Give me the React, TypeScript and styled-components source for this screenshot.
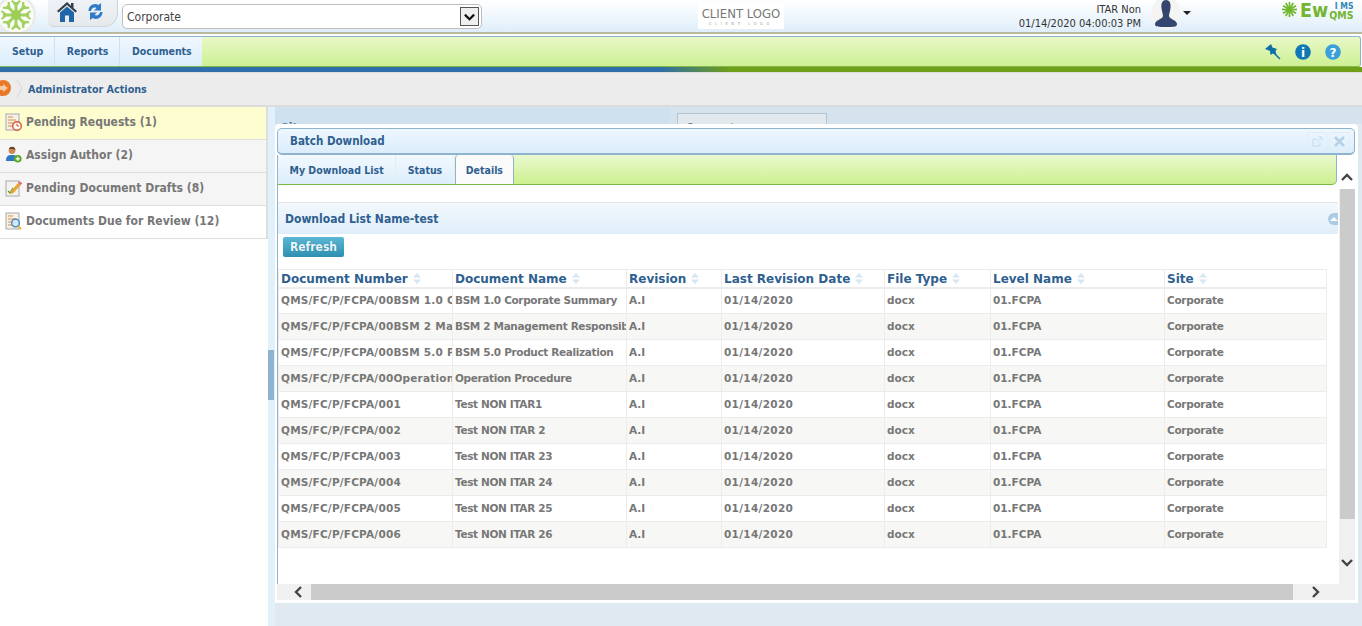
import React from "react";
import styled, { createGlobalStyle } from "styled-components";

const Global = createGlobalStyle`
  html, body { margin: 0; padding: 0; background: #fff; }
  body { font-family: "DejaVu Sans", sans-serif; overflow: hidden; }
  * { box-sizing: border-box; }
`;
const TAHOMA = `"DejaVu Sans Condensed", "DejaVu Sans", sans-serif`;
const VERDANA = `"DejaVu Sans", Verdana, sans-serif`;

const Page = styled.div`width: 1362px; height: 626px; overflow: hidden; display: flex; flex-direction: column; background: #fff;`;
const Header = styled.header`height: 32px; flex: none; display: flex; align-items: flex-start; background: linear-gradient(#ffffff, #dfeefa);`;
const LogoBall = styled.div`width: 36px; height: 32px; flex: none; margin-right: 12px; overflow: hidden;`;
const HomeTab = styled.div`width: 70px; height: 27px; flex: none; display: flex; align-items: center; gap: 11px; padding: 0 0 4px 9px; background: linear-gradient(#eef2f6, #e6e9ec); border-radius: 0 0 14px 6px; border-right: 1px solid #ccd2d8; border-bottom: 1px solid #d0d6dc;`;
const SelectBox = styled.div`width: 360px; height: 25px; margin: 4px 0 0 4px; flex: none; background: #fff; border: 1px solid #bdbdbd; border-radius: 5px; display: flex; align-items: center; justify-content: space-between; padding: 0 2px 0 4px; font: 12px ${TAHOMA}; color: #444;`;
const SelectArrow = styled.span`width: 19px; height: 19px; border: 1px solid #555; background: #efefef; display: flex; align-items: center; justify-content: center;`;
const ClientLogo = styled.div`width: 86px; height: 25px; flex: none; margin: 4px 0 0 216px; background: #fff; color: #777; font: 13px/13px ${TAHOMA}; text-align: center; padding-top: 3px; white-space: nowrap;`;
const ClientSub = styled.div`font-size: 4px; line-height: 7px; letter-spacing: 3.6px; color: #999;`;
const UserInfo = styled.div`width: 357px; flex: none; text-align: right; font: 11px/14px ${TAHOMA}; color: #333; padding-top: 3px;`;
const UserInfoLine = styled.div`white-space: nowrap;`;
const Avatar = styled.div`width: 32px; height: 30px; flex: none; margin-left: 9px;`;
const Caret = styled.span`width: 0; height: 0; flex: none; margin: 11px 0 0 1px; border: 4px solid transparent; border-top: 4px solid #222; border-bottom: none;`;
const Brand = styled.div`flex: none; margin: 0 0 0 auto; width: 81px; height: 28px; display: flex; align-items: flex-start; padding-top: 2px;`;
const BrandWord = styled.span`font: bold 19.5px/18px ${TAHOMA}; color: #72b52e; margin: 0 0 0 2px;`;
const BrandStack = styled.span`display: flex; flex-direction: column; font: bold 8.5px/8px ${TAHOMA}; color: #2e88b5; text-align: right; margin-left: 1px;`;
const BrandQms = styled.span`color: #72b52e; font-size: 10.5px; line-height: 10px; font-weight: bold;`;
const Rule = styled.div`height: 2px; flex: none; background: #b9b99d; margin-bottom: 2px;`;

const NavBar = styled.nav`height: 31px; flex: none; margin-right: 1px; display: flex; justify-content: space-between; align-items: stretch; background: linear-gradient(#e8f8c8, #cef094); border: 1px solid #8fb3cd; border-bottom: 1px solid #83b94b; border-left: none; border-radius: 0 3px 3px 0; overflow: hidden;`;
const NavTabs = styled.div`display: flex; gap: 1px; background: #cfe3ee;`;
const NavTab = styled.div`padding: 0 10.5px 2px 12px; display: flex; align-items: center; background: linear-gradient(#f0f8ff, #dcedfa); font: bold 10.5px ${TAHOMA}; color: #2f5f90;`;
const NavIcons = styled.div`display: flex; align-items: center; gap: 14px; padding-right: 19px;`;
const ColorLine = styled.div`height: 6px; flex: none; background: linear-gradient(90deg, #2f6ea8 0, #2f6ea8 660px, #6f9e18 730px, #6f9e18 100%); border-bottom: 1px solid #dcdcdc;`;
const Crumbs = styled.div`height: 34px; flex: none; background: #ececec; display: flex; align-items: center; border-bottom: 2px solid #dcdcdc;`;
const CrumbTitle = styled.span`font: bold 10.7px ${TAHOMA}; color: #2f5f90; margin-left: 4px;`;

const Body = styled.div`flex: 1; display: flex; min-height: 0;`;
const Sidebar = styled.aside`width: 268px; flex: none; background: #fff;`;
const SideItem = styled.div<{ $bg: string }>`height: 33px; display: flex; align-items: center; gap: 4px; padding: 0 0 3px 5px; background: ${(p) => p.$bg}; border-bottom: 1px solid #dedede; border-right: 2px solid #dedede; font: bold 12px ${TAHOMA}; color: #777;`;
const Splitter = styled.div`width: 7px; flex: none; background: #e2f0fa; display: flex; flex-direction: column;`;
const SplitHandle = styled.div`height: 50px; margin-top: 243px; width: 6px; background: #8fb4d0;`;
const Content = styled.main`flex: 1; position: relative; background: #e0e9f1; overflow: hidden;`;
const BackStrip = styled.div`height: 17px; background: linear-gradient(90deg, #cfe0ee 395px, #d5e3ef 395px); display: flex; font: bold 12px ${TAHOMA}; color: #2f5f90; padding: 14px 0 0 6px; overflow: hidden;`;
const BackCombo = styled.div`width: 150px; height: 24px; flex: none; margin: -8px 0 0 372px; background: #e2e9ee; border: 1px solid #b6c2cc; padding: 8px 8px 0; font: bold 11px/12px ${TAHOMA}; color: #555;`;

const Modal = styled.section`position: absolute; left: 0; top: 17px; width: 1083px; height: 479px; background: #fff; padding: 4px 3px 3px 2px; display: flex; flex-direction: column; border-radius: 4px 4px 0 0; box-shadow: 0 0 2px #d8e2ea;`;
const ModalTitle = styled.div`height: 27px; flex: none; display: flex; align-items: center; justify-content: space-between; background: linear-gradient(#edf7ff, #dcedfb); border: 1px solid #8fb3cd; border-bottom-width: 2px; border-radius: 5px; padding: 0 4px 0 12px; font: bold 11.5px ${TAHOMA}; color: #2f5f90;`;
const TitleTools = styled.div`display: flex; gap: 1px;`;
const TitleTool = styled.span`width: 21px; height: 19px; border: 1px solid #e2edf5; border-radius: 3px; display: flex; align-items: center; justify-content: center;`;
const ModalBody = styled.div`flex: 1; display: grid; grid-template-columns: 1fr 17px; grid-template-rows: 1fr 16px; min-height: 0;`;
const Viewport = styled.div`overflow: hidden; min-width: 0; display: flex; flex-direction: column; border-left: 1px solid #8fb3cd;`;
const TabBar = styled.div`height: 30px; flex: none; margin-right: 1px; margin-left: -1px; display: flex; background: linear-gradient(#eaf9cf, #cdf08f); border: 1px solid #8fb3cd; border-top: none; border-bottom: 1px solid #78b843; border-radius: 5px 0 5px 0;`;
const SubTab = styled.div<{ $active?: boolean }>`padding: 0 ${(p) => (p.$active ? "10px" : "11.5px")}; display: flex; align-items: center; font: bold 10.5px ${TAHOMA}; color: #2f5f90; background: ${(p) => (p.$active ? "#fafafa" : "linear-gradient(#f2f9ff, #dcedfa)")}; border-right: 1px solid ${(p) => (p.$active ? "#8fb3cd" : "#e5efdf")}; border-left: ${(p) => (p.$active ? "1px solid #8fb3cd" : "none")}; border-radius: ${(p) => (p.$active ? "4px 4px 0 0" : "0")};`;
const Spacer = styled.div`height: 17px; flex: none;`;
const PanelHead = styled.div`height: 32px; flex: none; display: flex; align-items: center; justify-content: space-between; background: linear-gradient(#f2f8fd, #e0eef9); border-top: 1px solid #e6e6e6; padding-left: 7px; font: bold 12px ${TAHOMA}; color: #2f5f90;`;
const Collapse = styled.span`width: 10px; height: 12px; border-radius: 6px 0 0 6px; background: #a9cbe6; display: flex; align-items: center; justify-content: flex-end;`;
const CollapseMark = styled.span`width: 0; height: 0; border: 4px solid transparent; border-bottom: 4px solid #fff; border-top: none;`;
const Toolbar = styled.div`height: 35px; flex: none; padding: 2px 0 0 5px;`;
const RefreshBtn = styled.button`width: 61px; height: 20px; padding: 0; border: none; border-radius: 2px; background: linear-gradient(#5cb8d4, #2d8fb2); color: #eaf6fb; font: bold 12px ${TAHOMA}; text-shadow: 0 0 1px #1b6e8e;`;
const Table = styled.table`width: 1048px; border-collapse: collapse; table-layout: fixed;`;
const Th = styled.th`height: 18px; padding: 1px 2px 0; text-align: left; border: 1px solid #ececec; border-bottom: 2px solid #ececec; font: bold 12px ${VERDANA}; color: #2f5f90; white-space: nowrap; overflow: hidden;`;
const Tr = styled.tr<{ $alt: boolean }>`background: ${(p) => (p.$alt ? "#f7f7f5" : "#fff")};`;
const Td = styled.td<{ $ls?: number }>`height: 26px; padding: 0 2px 2px; border: 1px solid #ececec; font: bold 10.5px ${VERDANA}; letter-spacing: ${(p) => p.$ls ?? 0}px; color: #777; white-space: nowrap; overflow: hidden;`;
const SortMark = styled.svg`margin-left: 5px; vertical-align: -1px;`;
const VScroll = styled.div`background: #f0f0f0; display: flex; flex-direction: column; align-items: center; margin-left: 1px;`;
const VThumb = styled.div`width: 15px; height: 330px; flex: none; background: #cbcbcb;`;
const ScrollUp = styled.div`height: 34px; width: 100%; flex: none; display: flex; align-items: center; justify-content: center; padding-top: 10px; background: #fff;`;
const ScrollDown = styled.div`height: 44px; width: 100%; flex: none; margin-top: auto; display: flex; align-items: center; justify-content: center;`;
const HScroll = styled.div`background: #f0f0f0; display: flex; align-items: center;`;
const HBtn = styled.div<{ $w: number; $pad?: number }>`width: ${(p) => p.$w}px; height: 16px; flex: none; padding-left: ${(p) => p.$pad ?? 0}px; display: flex; align-items: center; justify-content: center;`;
const HThumb = styled.div`flex: 1; height: 16px; background: #cbcbcb;`;
const Corner = styled.div`background: #f0f0f0;`;

const Snow = () => (
  <svg width="36" height="32" viewBox="0 0 36 32">
    <circle cx="16" cy="15" r="20" fill="#e9ece9" />
    <circle cx="16" cy="15" r="17.5" fill="#fbfbf8" />
    <g fill="none" stroke="#a3d160" strokeWidth="3">
      {[0, 45, 90, 135, 180, 225, 270, 315].map((a) => (
        <g key={a} transform={`rotate(${a} 16 15)`}>
          <path d="M16 15 V2" />
          <path d="M12 0.5 L16 5.5 L20 0.5" strokeWidth="2.2" />
        </g>
      ))}
    </g>
    <circle cx="16" cy="15" r="5" fill="#9ccd58" />
  </svg>
);
const Home = () => (
  <svg width="20" height="21" viewBox="0 0 20 21">
    <path d="M10 1 L0 10 L1.5 11.5 L10 4 L18.5 11.5 L20 10 L16.5 7 V2 H14 V4.7 Z" fill="#333f4d" />
    <path d="M3 11.5 L10 5.5 L17 11.5 V21 H12 V14.5 H8 V21 H3 Z" fill="#1f66a8" />
  </svg>
);
const Sync = () => (
  <svg width="15" height="17" viewBox="0 0 15 17">
    <path d="M0.5 8 C0.5 2.5 6 -0.5 10.5 2 L13 0 V7.5 H6 L8.5 5 C6 3.8 3.5 5 3 8 Z" fill="#2f7bc8" />
    <path d="M14.5 9 C14.5 14.5 9 17.5 4.5 15 L2 17 V9.5 H9 L6.5 12 C9 13.2 11.5 12 12 9 Z" fill="#2f7bc8" />
  </svg>
);
const Chevron = ({ dir, size = 14, color = "#444", sw = 2.4 }: { dir: "up" | "down" | "left" | "right"; size?: number; color?: string; sw?: number }) => {
  const d = { up: "M2 10 L7 5 L12 10", down: "M2 5 L7 10 L12 5", left: "M10 2 L5 7 L10 12", right: "M4 2 L9 7 L4 12" }[dir];
  return (
    <svg width={size} height={size} viewBox="0 0 14 14" fill="none">
      <path d={d} stroke={color} strokeWidth={sw} />
    </svg>
  );
};
const Person = () => (
  <svg width="32" height="30" viewBox="0 0 32 30">
    <ellipse cx="16" cy="13" rx="14" ry="17" fill="#f4f4f2" />
    <path d="M16 0 C20 0 21 4 20.5 8 C20 12 19 14 19 16 C19 19 27 20 27 24 C27 27 24 27 16 27 C8 27 5 27 5 24 C5 20 13 19 13 16 C13 14 12 12 11.5 8 C11 4 12 0 16 0 Z" fill="#34466f" />
  </svg>
);
const Flake = () => (
  <svg width="17" height="15" viewBox="0 0 17 15">
    <g stroke="#72b52e" strokeWidth="1.7">
      {[0, 30, 60, 90, 120, 150].map((a) => (
        <line key={a} x1="1" y1="7.5" x2="16" y2="7.5" transform={`rotate(${a} 8.5 7.5)`} />
      ))}
    </g>
    <circle cx="8.5" cy="7.5" r="2.4" fill="#72b52e" />
  </svg>
);
const Pin = () => (
  <svg width="16" height="16" viewBox="0 0 16 16">
    <path d="M0 5 L6 0 L7.5 3.5 L12 5 L10.5 7 L11.5 11 L8 9.5 L5.5 11 L5 7 Z" fill="#0f6fa8" />
    <path d="M8 8 L15 15" stroke="#0f6fa8" strokeWidth="1.5" />
  </svg>
);
const RoundBadge = ({ ch, light }: { ch: string; light?: boolean }) => (
  <svg width="16" height="16" viewBox="0 0 16 16">
    <circle cx="8" cy="8" r="7.8" fill={light ? "#3aa0dc" : "#0f78b4"} />
    <text x="8" y="12.5" textAnchor="middle" fontFamily="DejaVu Sans" fontWeight="bold" fontSize="12" fill="#fff">{ch}</text>
  </svg>
);
const CrumbArrow = () => (
  <svg width="24" height="24" viewBox="0 0 24 24">
    <circle cx="3" cy="11" r="8" fill="#e8782a" />
    <path d="M-3 9 H3 V7 L8 11 L3 15 V13 H-3 Z" fill="#f6c9a0" />
    <path d="M17 3 L22 11 L17 20" fill="none" stroke="#d6d6d6" />
  </svg>
);
const DocBase = () => (
  <>
    <rect x="1" y="1" width="13" height="16" fill="#f4f1ea" stroke="#a9a9a9" />
    <path d="M3 4 H8 M3 7 H11 M3 10 H8 M3 13 H7" stroke="#e08a3c" />
  </>
);
const ClockDoc = () => (
  <svg width="17" height="18" viewBox="0 0 17 18">
    <DocBase />
    <circle cx="12" cy="13" r="4.3" fill="#fff" stroke="#d9532c" strokeWidth="1.4" />
    <path d="M12 10.5 V13 H14" stroke="#d9532c" fill="none" />
  </svg>
);
const AddUser = () => (
  <svg width="17" height="17" viewBox="0 0 17 17">
    <circle cx="7" cy="4.5" r="3.4" fill="#c98a55" />
    <path d="M4 3 C5 0 10 0 10.5 4 L8 3 Z" fill="#6b3d1f" />
    <path d="M1 15 C1 10 3 9 7 9 C11 9 13 10 13 15 Z" fill="#2f78c4" />
    <circle cx="12.8" cy="12.8" r="3.8" fill="#58a82a" />
    <path d="M10.8 12.8 H14.8 M12.8 10.8 V14.8" stroke="#fff" strokeWidth="1.3" />
  </svg>
);
const EditDoc = () => (
  <svg width="17" height="18" viewBox="0 0 17 18">
    <rect x="1" y="2" width="13" height="15" fill="#f3f3ee" stroke="#a9a9a9" />
    <path d="M3 12 L5 14 L8 9" stroke="#4c9a2a" strokeWidth="1.2" fill="none" />
    <path d="M6 12 L14 3 L16.5 5 L8.5 14 L5.5 15 Z" fill="#eba133" />
    <path d="M14 3 L16.5 5" stroke="#d869a0" strokeWidth="2" />
  </svg>
);
const SearchDoc = () => (
  <svg width="17" height="18" viewBox="0 0 17 18">
    <DocBase />
    <circle cx="10.5" cy="11" r="3.8" fill="#cfe7f7" stroke="#3a7fb5" strokeWidth="1.3" />
    <path d="M13 14 L16 17" stroke="#e5b53a" strokeWidth="2" />
  </svg>
);
const Sort = () => (
  <SortMark width="8" height="11" viewBox="0 0 8 11">
    <path d="M4 0 L8 4.5 H0 Z M0 6.5 H8 L4 11 Z" fill="#d6e6f2" />
  </SortMark>
);

const sideItems = [
  { t: "Pending Requests (1)", bg: "#fdfdcf", I: ClockDoc },
  { t: "Assign Author (2)", bg: "#f5f5f5", I: AddUser },
  { t: "Pending Document Drafts (8)", bg: "#f5f5f5", I: EditDoc },
  { t: "Documents Due for Review (12)", bg: "#ffffff", I: SearchDoc },
];
const cols = [
  { t: "Document Number", w: 174 },
  { t: "Document Name", w: 174 },
  { t: "Revision", w: 95 },
  { t: "Last Revision Date", w: 163 },
  { t: "File Type", w: 106 },
  { t: "Level Name", w: 174 },
  { t: "Site", w: 162 },
];
const rows = [
  ["QMS/FC/P/FCPA/00BSM 1.0 Corporate Summary", "BSM 1.0 Corporate Summary"],
  ["QMS/FC/P/FCPA/00BSM 2 Management Responsibility", "BSM 2 Management Responsibility"],
  ["QMS/FC/P/FCPA/00BSM 5.0 Product Realization", "BSM 5.0 Product Realization"],
  ["QMS/FC/P/FCPA/00Operation Procedure", "Operation Procedure"],
  ["QMS/FC/P/FCPA/001", "Test NON ITAR1"],
  ["QMS/FC/P/FCPA/002", "Test NON ITAR 2"],
  ["QMS/FC/P/FCPA/003", "Test NON ITAR 23"],
  ["QMS/FC/P/FCPA/004", "Test NON ITAR 24"],
  ["QMS/FC/P/FCPA/005", "Test NON ITAR 25"],
  ["QMS/FC/P/FCPA/006", "Test NON ITAR 26"],
];

export default function App() {
  return (
    <Page>
      <Global />
      <Header>
        <LogoBall><Snow /></LogoBall>
        <HomeTab><Home /><Sync /></HomeTab>
        <SelectBox>
          Corporate
          <SelectArrow><Chevron dir="down" size={13} color="#111" /></SelectArrow>
        </SelectBox>
        <ClientLogo>
          CLIENT LOGO
          <ClientSub>CLIENT LOGO</ClientSub>
        </ClientLogo>
        <UserInfo>
          <UserInfoLine>ITAR Non</UserInfoLine>
          <UserInfoLine>01/14/2020 04:00:03 PM</UserInfoLine>
        </UserInfo>
        <Avatar><Person /></Avatar>
        <Caret />
        <Brand>
          <Flake />
          <BrandWord>Ew</BrandWord>
          <BrandStack>I MS<BrandQms>QMS</BrandQms></BrandStack>
        </Brand>
      </Header>
      <Rule />
      <NavBar>
        <NavTabs>
          <NavTab>Setup</NavTab>
          <NavTab>Reports</NavTab>
          <NavTab>Documents</NavTab>
        </NavTabs>
        <NavIcons>
          <Pin />
          <RoundBadge ch="i" />
          <RoundBadge ch="?" light />
        </NavIcons>
      </NavBar>
      <ColorLine />
      <Crumbs>
        <CrumbArrow />
        <CrumbTitle>Administrator Actions</CrumbTitle>
      </Crumbs>
      <Body>
        <Sidebar>
          {sideItems.map(({ t, bg, I }) => (
            <SideItem key={t} $bg={bg}><I />{t}</SideItem>
          ))}
        </Sidebar>
        <Splitter><SplitHandle /></Splitter>
        <Content>
          <BackStrip>
            Site
            <BackCombo>Corporate</BackCombo>
          </BackStrip>
          <Modal>
            <ModalTitle>
              Batch Download
              <TitleTools>
                <TitleTool>
                  <svg width="11" height="11" viewBox="0 0 11 11" fill="none" stroke="#c4dcee">
                    <path d="M8 6 V10 H1 V3 H5 M5 6 L10 1 M6.5 1 H10 V4.5" />
                  </svg>
                </TitleTool>
                <TitleTool>
                  <svg width="11" height="11" viewBox="0 0 11 11" stroke="#b4d1e8" strokeWidth="2.6">
                    <path d="M1 1 L10 10 M10 1 L1 10" />
                  </svg>
                </TitleTool>
              </TitleTools>
            </ModalTitle>
            <ModalBody>
              <Viewport>
                <TabBar>
                  <SubTab>My Download List</SubTab>
                  <SubTab>Status</SubTab>
                  <SubTab $active>Details</SubTab>
                </TabBar>
                <Spacer />
                <PanelHead>
                  Download List Name-test
                  <Collapse><CollapseMark /></Collapse>
                </PanelHead>
                <Toolbar><RefreshBtn>Refresh</RefreshBtn></Toolbar>
                <Table>
                  <colgroup>
                    {cols.map((c) => <col key={c.t} width={c.w} />)}
                  </colgroup>
                  <thead>
                    <tr>{cols.map((c) => <Th key={c.t}>{c.t}<Sort /></Th>)}</tr>
                  </thead>
                  <tbody>
                    {rows.map((r, i) => (
                      <Tr key={r[0]} $alt={i % 2 === 1}>
                        <Td $ls={0.2}>{r[0]}</Td>
                        <Td $ls={-0.35}>{r[1]}</Td>
                        <Td>A.I</Td>
                        <Td $ls={0.3}>01/14/2020</Td>
                        <Td>docx</Td>
                        <Td>01.FCPA</Td>
                        <Td $ls={-0.3}>Corporate</Td>
                      </Tr>
                    ))}
                  </tbody>
                </Table>
              </Viewport>
              <VScroll>
                <ScrollUp><Chevron dir="up" /></ScrollUp>
                <VThumb />
                <ScrollDown><Chevron dir="down" /></ScrollDown>
              </VScroll>
              <HScroll>
                <HBtn $w={34} $pad={8}><Chevron dir="left" /></HBtn>
                <HThumb />
                <HBtn $w={45}><Chevron dir="right" /></HBtn>
              </HScroll>
              <Corner />
            </ModalBody>
          </Modal>
        </Content>
      </Body>
    </Page>
  );
}
